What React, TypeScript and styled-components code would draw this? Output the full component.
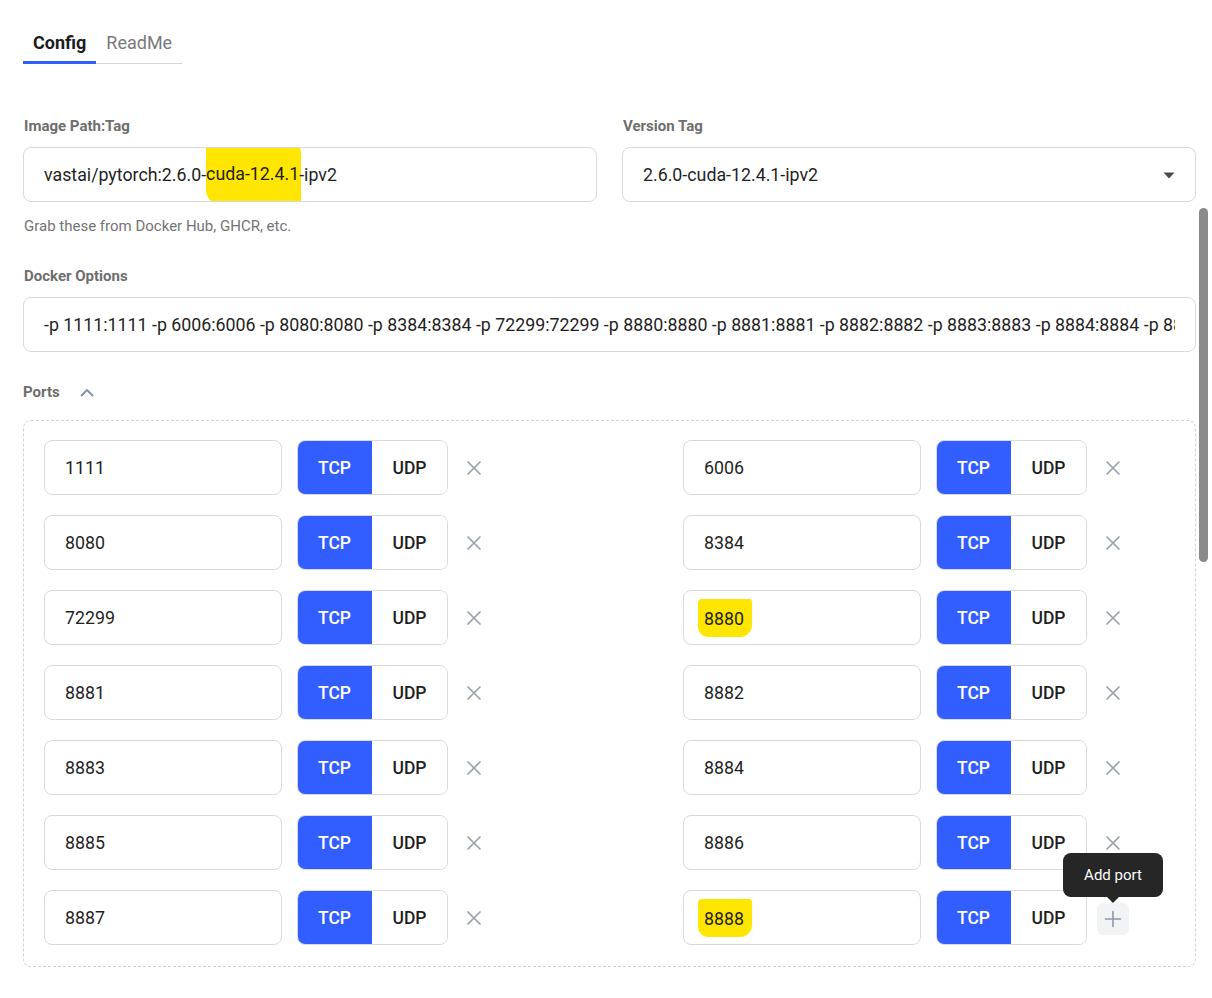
import React from "react";
import styled, { createGlobalStyle } from "styled-components";

const GlobalStyle = createGlobalStyle`
  html, body {
    margin: 0;
    padding: 0;
    background: #ffffff;
    font-family: Roboto, "Liberation Sans", Arial, sans-serif;
    color: #1f1f1f;
  }
  * {
    box-sizing: border-box;
  }
`;

const ports: { port: string; marked?: boolean }[] = [
  { port: "1111" },
  { port: "6006" },
  { port: "8080" },
  { port: "8384" },
  { port: "72299" },
  { port: "8880", marked: true },
  { port: "8881" },
  { port: "8882" },
  { port: "8883" },
  { port: "8884" },
  { port: "8885" },
  { port: "8886" },
  { port: "8887" },
  { port: "8888", marked: true },
];

const dockerOptions = ports
  .map(({ port }) => `-p ${port}:${port}`)
  .join(" ");

export default function App() {
  return (
    <>
      <GlobalStyle />
      <Page>
        <TabList>
          <Tab active>Config</Tab>
          <Tab>ReadMe</Tab>
        </TabList>

        <TwoCols>
          <Field>
            <Label>Image Path:Tag</Label>
            <TextBox>
              vastai/pytorch:2.6.0-<Mark>cuda-12.4.1</Mark>-ipv2
            </TextBox>
            <Helper>Grab these from Docker Hub, GHCR, etc.</Helper>
          </Field>
          <Field>
            <Label>Version Tag</Label>
            <TextBox>
              2.6.0-cuda-12.4.1-ipv2
              <Caret width="12" height="7" viewBox="0 0 12 7">
                <path d="M0.5 0.5 L11.5 0.5 L6 6.5 Z" fill="#4a4a4a" />
              </Caret>
            </TextBox>
          </Field>
        </TwoCols>

        <Field>
          <Label>Docker Options</Label>
          <TextBox>
            <Clip>{dockerOptions}</Clip>
          </TextBox>
        </Field>

        <PortsHeader>
          <Label as="span">Ports</Label>
          <svg width="14" height="9" viewBox="0 0 14 9">
            <polyline
              points="1.5,7.5 7,2 12.5,7.5"
              fill="none"
              stroke="#8190ad"
              strokeWidth="1.8"
              strokeLinecap="round"
              strokeLinejoin="round"
            />
          </svg>
        </PortsHeader>

        <PortsBox>
          {ports.map(({ port, marked }, i) => (
            <PortRow key={port}>
              <PortInput>
                {marked ? <Mark small>{port}</Mark> : port}
              </PortInput>
              <Toggle>
                <ToggleOption active>TCP</ToggleOption>
                <ToggleOption>UDP</ToggleOption>
              </Toggle>
              {i === ports.length - 1 ? (
                <AddButton>
                  <Tooltip>Add port</Tooltip>
                  <svg width="18" height="18" viewBox="0 0 18 18">
                    <path
                      d="M9 1.5 V16.5 M1.5 9 H16.5"
                      stroke="#8e96a6"
                      strokeWidth="1.6"
                      strokeLinecap="round"
                    />
                  </svg>
                </AddButton>
              ) : (
                <IconButton>
                  <svg width="16" height="16" viewBox="0 0 16 16">
                    <path
                      d="M2 2 L14 14 M14 2 L2 14"
                      stroke="#9aa1ae"
                      strokeWidth="1.7"
                      strokeLinecap="round"
                    />
                  </svg>
                </IconButton>
              )}
            </PortRow>
          ))}
        </PortsBox>
      </Page>
      <ScrollThumb />
    </>
  );
}

const Page = styled.div`
  padding: 22px 16px 40px 23px;
  display: flex;
  flex-direction: column;
`;

const TabList = styled.div`
  display: flex;
  align-self: flex-start;
  border-bottom: 1px solid #d6d6d6;
  margin-bottom: 53px;
`;

const Tab = styled.div<{ active?: boolean }>`
  padding: 10px 10px 7px;
  line-height: 22px;
  font-size: 18px;
  font-weight: ${(p) => (p.active ? 700 : 400)};
  color: ${(p) => (p.active ? "#1c1c1c" : "#7a7a7a")};
  border-bottom: 3px solid ${(p) => (p.active ? "#335eff" : "transparent")};
  margin-bottom: -1px;
`;

const TwoCols = styled.div`
  display: grid;
  grid-template-columns: 1fr 1fr;
  column-gap: 25px;
  margin-bottom: 32px;
`;

const Field = styled.div`
  display: flex;
  flex-direction: column;
  min-width: 0;
`;

const Label = styled.div`
  font-size: 15px;
  font-weight: 700;
  line-height: 18px;
  color: #6e6e6e;
  margin: 0 0 12px 1px;
`;

const TextBox = styled.div`
  position: relative;
  height: 55px;
  border: 1px solid #dadada;
  border-radius: 8px;
  padding: 0 20px;
  display: flex;
  align-items: center;
  font-size: 17.8px;
  color: #1f1f1f;
  white-space: nowrap;
  overflow: hidden;
`;

const Clip = styled.span`
  overflow: hidden;
  white-space: nowrap;
  text-overflow: clip;
  width: 100%;
`;

const Caret = styled.svg`
  position: absolute;
  right: 20px;
  top: 24px;
`;

const Helper = styled.div`
  margin: 15px 0 0 1px;
  font-size: 15px;
  line-height: 18px;
  color: #747474;
`;

const Mark = styled.span<{ small?: boolean }>`
  background: #ffe600;
  padding: ${(p) => (p.small ? "9px 8px 8px 6px" : "17px 2px 20px 0")};
  margin: ${(p) => (p.small ? "0 -8px 0 -6px" : "0 -2px 0 0")};
  border-radius: ${(p) => (p.small ? "4px 3px 12px 10px" : "3px 6px 4px 14px")};
`;

const PortsHeader = styled.div`
  display: flex;
  align-items: center;
  gap: 20px;
  margin-top: 31px;
  margin-bottom: 19px;

  ${Label} {
    margin: 0;
  }
`;

const PortsBox = styled.div`
  border: 1px dashed #d4d4d4;
  border-radius: 8px;
  padding: 19px 20px 21px;
  display: grid;
  grid-template-columns: 1fr 1fr;
  column-gap: 147px;
  row-gap: 20px;
`;

const PortRow = styled.div`
  display: flex;
  align-items: center;
`;

const PortInput = styled.div`
  width: 238px;
  height: 55px;
  border: 1px solid #dadada;
  border-radius: 8px;
  padding: 0 20px;
  display: flex;
  align-items: center;
  font-size: 17.8px;
  color: #1f1f1f;
  margin-right: 15px;
`;

const Toggle = styled.div`
  display: flex;
  width: 151px;
  height: 55px;
  border: 1px solid #dadada;
  border-radius: 8px;
  overflow: hidden;
  margin-right: 10px;
`;

const ToggleOption = styled.div<{ active?: boolean }>`
  flex: 1;
  display: flex;
  align-items: center;
  justify-content: center;
  font-size: 17.5px;
  font-weight: 500;
  background: ${(p) => (p.active ? "#335eff" : "#ffffff")};
  color: ${(p) => (p.active ? "#ffffff" : "#1f1f1f")};
  margin: ${(p) => (p.active ? "-1px 0 -1px -1px" : "0")};
`;

const IconButton = styled.div`
  width: 32px;
  height: 32px;
  display: flex;
  align-items: center;
  justify-content: center;
`;

const AddButton = styled(IconButton)`
  position: relative;
  background: #f2f3f5;
  border-radius: 6px;
  margin-top: 3px;
`;

const Tooltip = styled.div`
  position: absolute;
  bottom: calc(100% + 6px);
  left: 50%;
  transform: translateX(-50%);
  width: 100px;
  height: 44px;
  background: #262626;
  color: #ffffff;
  border-radius: 8px;
  font-size: 15px;
  display: flex;
  align-items: center;
  justify-content: center;
  white-space: nowrap;

  &::after {
    content: "";
    position: absolute;
    top: 100%;
    left: 50%;
    margin-left: -6px;
    border: 6px solid transparent;
    border-top-color: #262626;
    border-bottom-width: 0;
  }
`;

const ScrollThumb = styled.div`
  position: fixed;
  top: 208px;
  right: 4px;
  width: 9px;
  height: 354px;
  border-radius: 5px;
  background: #8a8a8a;
`;
